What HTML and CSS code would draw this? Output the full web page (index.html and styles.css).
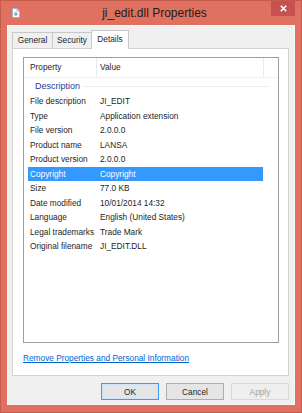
FILE: index.html
```html
<!DOCTYPE html>
<html lang="en">
<head>
  <meta charset="UTF-8">
  <title>ji_edit.dll Properties</title>
  <link rel="stylesheet" href="styles.css">
</head>
<body>

  <div class="window">
    <div class="titlebar">
      <div class="app-icon">
        <svg width="8" height="10" viewBox="0 0 8 10">
          <path d="M0.5 0.5h4.5l2.5 2.5v6.5h-7z" fill="#fdfdfd" stroke="#a9b2bd"/>
          <path d="M5 0.5v2.5h2.5" fill="none" stroke="#a9b2bd"/>
          <circle cx="3.8" cy="6" r="1.7" fill="#7c97b9"/>
          <circle cx="3.8" cy="6" r="0.6" fill="#dfe7f1"/>
        </svg>
      </div>
      <div class="title">ji_edit.dll Properties</div>
      <div class="close-btn">
        <svg width="7" height="7" viewBox="0 0 7 7">
          <path d="M0.8 0.8l5.4 5.4M6.2 0.8l-5.4 5.4" stroke="#fff" stroke-width="1.6"/>
        </svg>
      </div>
    </div>

    <div class="client">
      <div class="tabs">
        <div class="tab tab-general">General</div>
        <div class="tab tab-security">Security</div>
        <div class="tab tab-details selected">Details</div>
      </div>

      <div class="panel">
        <div class="listview">
          <div class="lv-header">
            <div class="hcol hcol-name">Property</div>
            <div class="hcol hcol-value">Value</div>
          </div>
          <div class="group">
            <span class="group-title">Description</span>
            <span class="group-line"></span>
          </div>
          <div class="row"><span class="name">File description</span><span class="value">JI_EDIT</span></div>
          <div class="row"><span class="name">Type</span><span class="value">Application extension</span></div>
          <div class="row"><span class="name">File version</span><span class="value">2.0.0.0</span></div>
          <div class="row"><span class="name">Product name</span><span class="value">LANSA</span></div>
          <div class="row"><span class="name">Product version</span><span class="value">2.0.0.0</span></div>
          <div class="row selected"><span class="name">Copyright</span><span class="value">Copyright</span></div>
          <div class="row"><span class="name">Size</span><span class="value">77.0 KB</span></div>
          <div class="row"><span class="name">Date modified</span><span class="value">10/01/2014 14:32</span></div>
          <div class="row"><span class="name">Language</span><span class="value">English (United States)</span></div>
          <div class="row"><span class="name">Legal trademarks</span><span class="value">Trade Mark</span></div>
          <div class="row"><span class="name">Original filename</span><span class="value">JI_EDIT.DLL</span></div>
        </div>
        <a class="remove-link" href="#">Remove Properties and Personal Information</a>
      </div>

      <div class="buttons">
        <button class="btn btn-default">OK</button>
        <button class="btn">Cancel</button>
        <button class="btn" disabled>Apply</button>
      </div>
    </div>
  </div>

</body>
</html>
```

FILE: styles.css
```css
body {
  margin: 0;
  background-color: #e0705f;
  font-family: "Liberation Sans", Arial, sans-serif;
  font-size: 8.3px;
  color: #1e1e1e;
}
.window {
  width: 302px;
  height: 413px;
  box-sizing: border-box;
  border: 1px solid #c45b4c;
  background-color: #e0705f;
  display: flex;
  flex-direction: column;
}
.titlebar {
  height: 24px;
  flex: none;
  display: grid;
  grid-template-columns: 1fr auto 1fr;
  padding: 0 6px 0 11px;
}
.app-icon {
  align-self: start;
  margin-top: 7px;
  height: 10px;
}
.app-icon svg {
  display: block;
}
.title {
  font-size: 12px;
  line-height: 24px;
  color: #1c1c1c;
  padding-left: 2px;
}
.close-btn {
  justify-self: end;
  width: 24px;
  height: 15px;
  background-color: #c75050;
  display: flex;
  align-items: center;
  justify-content: center;
}
.close-btn svg {
  display: block;
}
.client {
  flex: 1;
  margin: 0 6px 7px 6px;
  background-color: #f0f0f0;
  padding: 5px 6px 0 5px;
  box-shadow: inset 0 0 0 1px #f7f7f7;
}
.tabs {
  display: flex;
  align-items: flex-end;
  height: 18px;
}
.tab {
  box-sizing: border-box;
  height: 16px;
  border: 1px solid #c9c9c9;
  border-bottom: none;
  background-color: #f0f0f0;
  text-align: center;
  line-height: 15px;
}
.tab-general {
  width: 41px;
}
.tab-security {
  width: 40px;
  margin-left: -1px;
}
.tab-details {
  width: 38px;
  margin-left: -1px;
}
.tab.selected {
  height: 19px;
  margin-bottom: -1px;
  background-color: #fff;
  position: relative;
  z-index: 1;
  line-height: 16px;
}
.panel {
  width: 277px;
  height: 328px;
  box-sizing: border-box;
  border: 1px solid #d2d2d2;
  background-color: #fff;
  padding: 8px 9px 0 10px;
}
.listview {
  width: 256px;
  height: 286px;
  box-sizing: border-box;
  border: 1px solid #9a9ea5;
}
.lv-header {
  display: flex;
  height: 20px;
  box-sizing: border-box;
  border-bottom: 1px solid #eef1f5;
}
.hcol {
  box-sizing: border-box;
  line-height: 19px;
  border-right: 1px solid #e3ebf5;
}
.hcol-name {
  width: 73px;
  padding-left: 6px;
}
.hcol-value {
  width: 167px;
  padding-left: 3px;
}
.group {
  height: 16px;
  display: flex;
  align-items: center;
  padding-left: 11px;
  padding-right: 9px;
}
.group-title {
  color: #1e3a96;
  font-size: 9px;
}
.group-line {
  flex: 1;
  height: 1px;
  margin-left: 4px;
  background-color: #e8edf5;
}
.row {
  display: flex;
  height: 14.5px;
  line-height: 14.5px;
  width: 235px;
  margin-left: 4px;
  white-space: nowrap;
}
.row .name {
  width: 70px;
  padding-left: 2px;
  box-sizing: border-box;
}
.row .value {
  padding-left: 2px;
}
.row.selected {
  background-color: #3399ff;
  color: #fff;
}
.remove-link {
  display: block;
  margin-top: 10px;
  color: #0066cc;
  line-height: 10px;
}
.buttons {
  display: flex;
  justify-content: flex-end;
  gap: 7px;
  margin-top: 7px;
}
.btn {
  width: 58px;
  height: 17px;
  box-sizing: border-box;
  border: 1px solid #adadad;
  background-color: #e5e5e5;
  font-family: "Liberation Sans", Arial, sans-serif;
  font-size: 8.3px;
  color: #1e1e1e;
  padding: 0;
}
.btn-default {
  border-color: #3d9bf0;
  box-shadow: inset 0 0 0 1px #cde4fb;
}
.btn:disabled {
  border-color: #d9d9d9;
  background-color: #efefef;
  color: #a3a3a3;
}
```
